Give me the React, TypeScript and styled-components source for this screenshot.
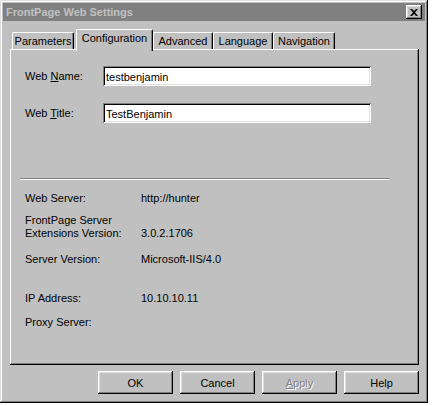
import styled, { createGlobalStyle } from "styled-components";

const GlobalStyle = createGlobalStyle`
  html, body {
    margin: 0;
    padding: 0;
    background: #fff;
  }
  body {
    font-family: "Liberation Sans", Arial, sans-serif;
    font-size: 11px;
    color: #000;
  }
`;

const tabs = [
  { label: "Parameters", width: 62 },
  { label: "Configuration", width: 77, active: true },
  { label: "Advanced", width: 60 },
  { label: "Language", width: 60 },
  { label: "Navigation", width: 62 },
];

const info = [
  { label: ["Web Server:"], value: "http://hunter", gap: 12 },
  { label: ["FrontPage Server", "Extensions Version:"], value: "3.0.2.1706", gap: 9 },
  { label: ["Server Version:"], value: "Microsoft-IIS/4.0", gap: 13 },
  { label: ["IP Address:"], value: "10.10.10.11", gap: 26 },
  { label: ["Proxy Server:"], value: "", gap: 11 },
];

const App = () => {
  return (
    <>
      <GlobalStyle />
      <Dialog>
        <TitleBar>
          <Title>FrontPage Web Settings</Title>
          <CloseButton>
            <svg width="8" height="7" viewBox="0 0 8 7">
              <path d="M0 0h2l2 2 2-2h2L5 3.5 8 7H6L4 5 2 7H0l3-3.5z" fill="#000" />
            </svg>
          </CloseButton>
        </TitleBar>

        <TabRow>
          {tabs.map((t) => (
            <Tab key={t.label} $width={t.width} $active={!!t.active}>
              {t.label}
            </Tab>
          ))}
        </TabRow>

        <Panel>
          <FieldRow $gap={15}>
            <FieldLabel>
              Web <U>N</U>ame:
            </FieldLabel>
            <TextInput defaultValue="testbenjamin" />
          </FieldRow>
          <FieldRow $gap={17}>
            <FieldLabel>
              Web <U>T</U>itle:
            </FieldLabel>
            <TextInput defaultValue="TestBenjamin" />
          </FieldRow>

          <Separator />

          {info.map((row) => (
            <InfoRow key={row.label.join(" ")} $gap={row.gap}>
              <InfoLabel>
                {row.label.map((l) => (
                  <div key={l}>{l}</div>
                ))}
              </InfoLabel>
              <InfoValue>{row.value}</InfoValue>
            </InfoRow>
          ))}
        </Panel>

        <ButtonRow>
          <Button>OK</Button>
          <Button>Cancel</Button>
          <Button disabled>
            <U>A</U>pply
          </Button>
          <Button>Help</Button>
        </ButtonRow>
      </Dialog>
    </>
  );
};

export default App;

const Dialog = styled.div`
  box-sizing: border-box;
  width: 428px;
  height: 403px;
  padding: 3px;
  background: #c0c0c0;
  box-shadow: inset -1px -1px #000, inset 1px 1px #dfdfdf,
    inset -2px -2px #808080, inset 2px 2px #fff;
  display: flex;
  flex-direction: column;
`;

const TitleBar = styled.div`
  height: 18px;
  background: #808080;
  display: flex;
  align-items: center;
  justify-content: space-between;
  padding: 0 3px 0 3px;
`;

const Title = styled.span`
  color: #c0c0c0;
  font-weight: bold;
  font-size: 11px;
`;

const CloseButton = styled.div`
  box-sizing: border-box;
  width: 16px;
  height: 14px;
  background: #c0c0c0;
  display: flex;
  align-items: center;
  justify-content: center;
  box-shadow: inset -1px -1px #000, inset 1px 1px #fff,
    inset -2px -2px #808080, inset 2px 2px #dfdfdf;
`;

const TabRow = styled.div`
  display: flex;
  align-items: flex-end;
  height: 20px;
  margin: 8px 0 0 9px;
  position: relative;
  z-index: 1;
`;

const Tab = styled.div<{ $width: number; $active: boolean }>`
  box-sizing: border-box;
  width: ${(p) => p.$width}px;
  height: ${(p) => (p.$active ? 22 : 17)}px;
  margin-bottom: ${(p) => (p.$active ? -2 : 0)}px;
  margin-right: ${(p) => (p.$width === 62 && !p.$active ? 2 : 0)}px;
  background: #c0c0c0;
  border-top: 1px solid #fff;
  border-left: 1px solid #fff;
  border-right: 1px solid #000;
  border-radius: 2px 2px 0 0;
  box-shadow: inset -1px 0 #808080;
  text-align: center;
  padding-top: ${(p) => (p.$active ? 2 : 2)}px;
  line-height: 13px;
  white-space: nowrap;

  &:last-child {
    margin-right: 0;
  }
`;

const Panel = styled.div`
  box-sizing: border-box;
  width: 409px;
  height: 316px;
  margin-left: 7px;
  padding-top: 2px;
  background: #c0c0c0;
  box-shadow: inset -1px -1px #000, inset 1px 1px #fff, inset -2px -2px #808080;
  display: flex;
  flex-direction: column;
`;

const FieldRow = styled.div<{ $gap: number }>`
  display: grid;
  grid-template-columns: 78px 268px;
  align-items: center;
  height: 20px;
  margin: ${(p) => p.$gap}px 0 0 15px;
`;

const FieldLabel = styled.label`
  white-space: nowrap;
`;

const U = styled.span`
  text-decoration: underline;
`;

const TextInput = styled.input`
  box-sizing: border-box;
  width: 268px;
  height: 20px;
  border: none;
  outline: none;
  padding: 1px 3px 0 3px;
  margin: 0;
  background: #fff;
  font-family: "Liberation Sans", Arial, sans-serif;
  font-size: 11px;
  color: #000;
  box-shadow: inset 1px 1px #808080, inset -1px -1px #fff, inset 2px 2px #000,
    inset -2px -2px #dfdfdf;
`;

const Separator = styled.div`
  width: 369px;
  height: 0;
  margin: 55px 0 0 10px;
  border-top: 1px solid #808080;
  border-bottom: 1px solid #fff;
`;

const InfoRow = styled.div<{ $gap: number }>`
  display: grid;
  grid-template-columns: 116px auto;
  align-items: end;
  line-height: 13px;
  margin: ${(p) => p.$gap}px 0 0 15px;
`;

const InfoLabel = styled.div`
  white-space: nowrap;
`;

const InfoValue = styled.div`
  white-space: nowrap;
`;

const ButtonRow = styled.div`
  display: flex;
  justify-content: flex-end;
  gap: 7px;
  width: 409px;
  margin: 6px 0 0 7px;
`;

const Button = styled.button`
  box-sizing: border-box;
  width: 75px;
  height: 23px;
  border: none;
  padding: 0;
  background: #c0c0c0;
  font-family: "Liberation Sans", Arial, sans-serif;
  font-size: 11px;
  color: #000;
  box-shadow: inset -1px -1px #000, inset 1px 1px #fff,
    inset -2px -2px #808080, inset 2px 2px #dfdfdf;

  &:disabled {
    color: #808080;
    text-shadow: 1px 1px #fff;
  }
`;
